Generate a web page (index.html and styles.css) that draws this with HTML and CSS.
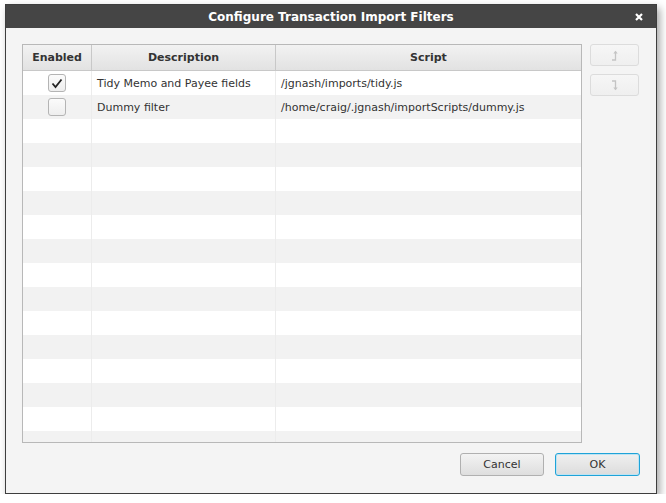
FILE: index.html
```html
<!DOCTYPE html>
<html>
<head>
<meta charset="utf-8">
<link rel="stylesheet" href="styles.css">
</head>
<body>
<div class="window">
  <div class="titlebar">
    <span class="title">Configure Transaction Import Filters</span>
    <span class="close"><svg width="8" height="8" viewBox="0 0 8 8"><path d="M1 1 L7 7 M7 1 L1 7" stroke="#fff" stroke-width="2.2"/></svg></span>
  </div>
  <div class="content">
    <div class="main">
      <div class="table">
        <div class="thead">
          <div class="th c1">Enabled</div>
          <div class="th c2">Description</div>
          <div class="th c3">Script</div>
        </div>
        <div class="tbody">
          <div class="row">
            <div class="td c1"><span class="check checked"><svg width="12" height="11" viewBox="0 0 12 11"><path d="M1.5 5.5 L4.5 9 L10.5 1.5" fill="none" stroke="#222" stroke-width="1.8"/></svg></span></div>
            <div class="td c2">Tidy Memo and Payee fields</div>
            <div class="td c3">/jgnash/imports/tidy.js</div>
          </div>
          <div class="row">
            <div class="td c1"><span class="check"></span></div>
            <div class="td c2">Dummy filter</div>
            <div class="td c3">/home/craig/.jgnash/importScripts/dummy.js</div>
          </div>
          <div class="row"><div class="td c1"></div><div class="td c2"></div><div class="td c3"></div></div>
          <div class="row"><div class="td c1"></div><div class="td c2"></div><div class="td c3"></div></div>
          <div class="row"><div class="td c1"></div><div class="td c2"></div><div class="td c3"></div></div>
          <div class="row"><div class="td c1"></div><div class="td c2"></div><div class="td c3"></div></div>
          <div class="row"><div class="td c1"></div><div class="td c2"></div><div class="td c3"></div></div>
          <div class="row"><div class="td c1"></div><div class="td c2"></div><div class="td c3"></div></div>
          <div class="row"><div class="td c1"></div><div class="td c2"></div><div class="td c3"></div></div>
          <div class="row"><div class="td c1"></div><div class="td c2"></div><div class="td c3"></div></div>
          <div class="row"><div class="td c1"></div><div class="td c2"></div><div class="td c3"></div></div>
          <div class="row"><div class="td c1"></div><div class="td c2"></div><div class="td c3"></div></div>
          <div class="row"><div class="td c1"></div><div class="td c2"></div><div class="td c3"></div></div>
          <div class="row"><div class="td c1"></div><div class="td c2"></div><div class="td c3"></div></div>
          <div class="row"><div class="td c1"></div><div class="td c2"></div><div class="td c3"></div></div>
          <div class="row"><div class="td c1"></div><div class="td c2"></div><div class="td c3"></div></div>
        </div>
      </div>
      <div class="side">
        <button class="sbtn" disabled><svg width="8" height="11" viewBox="0 0 8 11"><path d="M1 10 H4.5 V1.5" fill="none" stroke="#c4c4c4" stroke-width="1.3"/><path d="M2.3 3.5 L4.5 0.8 L6.7 3.5 Z" fill="#c4c4c4"/></svg></button>
        <button class="sbtn" disabled><svg width="8" height="11" viewBox="0 0 8 11"><path d="M1 1 H4.5 V9.5" fill="none" stroke="#c4c4c4" stroke-width="1.3"/><path d="M2.3 7.5 L4.5 10.2 L6.7 7.5 Z" fill="#c4c4c4"/></svg></button>
      </div>
    </div>
    <div class="footer">
      <button class="btn">Cancel</button>
      <button class="btn default">OK</button>
    </div>
  </div>
</div>
</body>
</html>
```

FILE: styles.css
```css
html, body {
  margin: 0;
  padding: 0;
  background: #ffffff;
}
body {
  font-family: "DejaVu Sans", sans-serif;
  font-size: 11px;
  color: #333;
}
.window {
  margin: 4px 0 0 5px;
  width: 650px;
  height: 488px;
  border: 1px solid #3e3e3e;
  background: #f4f4f4;
  box-shadow: 3px 4px 8px rgba(0,0,0,0.35);
  display: flex;
  flex-direction: column;
}
.titlebar {
  height: 23px;
  background: #454545;
  color: #fff;
  display: flex;
  align-items: center;
  justify-content: center;
  position: relative;
}
.title {
  font-weight: bold;
  font-size: 12px;
}
.close {
  position: absolute;
  right: 13px;
  top: 8px;
  display: flex;
}
.content {
  flex: 1;
  display: flex;
  flex-direction: column;
  padding: 16px 16px 16px 16px;
}
.main {
  display: flex;
  gap: 8px;
}
.table {
  width: 558px;
  height: 397px;
  border: 1px solid #b8b8b8;
  background: #fff;
  overflow: hidden;
  display: flex;
  flex-direction: column;
}
.thead {
  display: flex;
  height: 25px;
  border-bottom: 1px solid #c8c8c8;
  background: linear-gradient(#f2f2f2, #e2e2e2);
  flex: none;
}
.th {
  display: flex;
  align-items: center;
  justify-content: center;
  font-weight: bold;
  color: #333;
  border-right: 1px solid #c8c8c8;
  box-sizing: border-box;
}
.c1 { width: 69px; flex: none; }
.c2 { width: 184px; flex: none; }
.c3 { flex: 1; }
.th.c3 { border-right: none; }
.row {
  display: flex;
  height: 24px;
  flex: none;
}
.row:nth-child(even) {
  background: #f2f2f2;
}
.td {
  display: flex;
  align-items: center;
  padding-left: 5px;
  box-sizing: border-box;
  border-right: 1px solid #ececec;
  color: #333;
  white-space: nowrap;
}
.td.c1 {
  justify-content: center;
  padding-left: 0;
}
.td.c3 { border-right: none; }
.check {
  width: 16px;
  height: 16px;
  border: 1px solid #b4b4b4;
  border-radius: 3px;
  background: linear-gradient(#fbfbfb, #eeeeee);
  display: flex;
  align-items: center;
  justify-content: center;
}
.side {
  display: flex;
  flex-direction: column;
  gap: 8px;
}
.sbtn {
  width: 49px;
  height: 22px;
  border: 1px solid #dcdcdc;
  border-radius: 3px;
  background: linear-gradient(#f6f6f6, #efefef);
  display: flex;
  align-items: center;
  justify-content: center;
  padding: 0;
}
.footer {
  margin-top: 10px;
  display: flex;
  justify-content: flex-end;
  gap: 11px;
}
.btn {
  font-family: "DejaVu Sans", sans-serif;
  font-size: 11px;
  color: #333;
  width: 84px;
  height: 23px;
  border: 1px solid #b0b0b0;
  border-radius: 3px;
  background: linear-gradient(#f3f3f3, #dedede);
  padding: 0;
}
.btn.default {
  width: 85px;
  border: 1px solid #1fa3d8;
  box-shadow: inset 0 0 0 1px #bfe3f2;
  background: linear-gradient(#f0f0f0, #dcdcdc);
}
```
